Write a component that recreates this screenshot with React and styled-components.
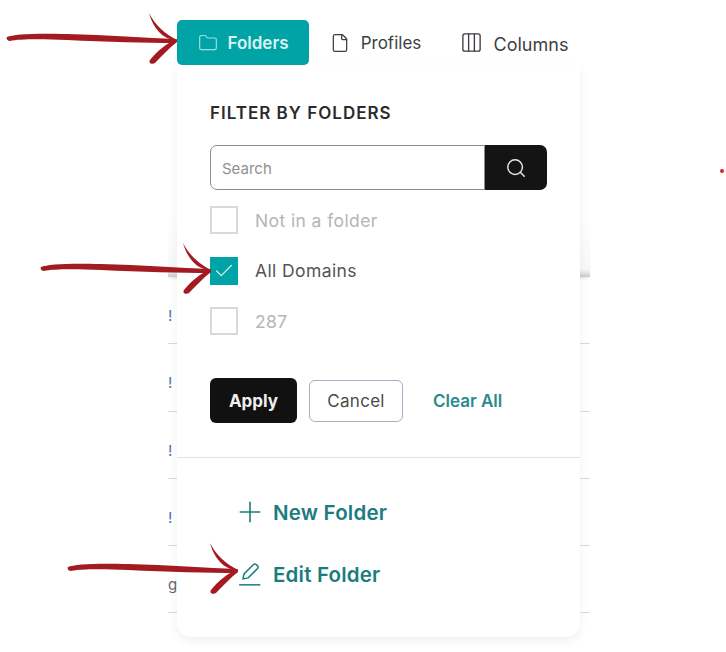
import React from "react";
import styled, { createGlobalStyle } from "styled-components";
import { Folder, File, Columns3, Search, Check } from "lucide-react";

const GlobalStyle = createGlobalStyle`
	body {
		margin: 0;
		background: #fff;
		font-family: "Inter", "Liberation Sans", sans-serif;
	}
`;

const rowStubs = ["!", "!", "!", "!", "g."];

const folders = [
	{ label: "Not in a folder", checked: false },
	{ label: "All Domains", checked: true },
	{ label: "287", checked: false },
];

const arrows = [
	{ left: 7, top: 13 },
	{ left: 41, top: 243 },
	{ left: 68, top: 543 },
];

const Arrow = ({ left, top }) => (
	<ArrowMark $left={left} $top={top} viewBox="0 0 170 52" width="170" height="52">
		<path d="M0 24 C6 21 30 20 60 21 C100 22 140 25 169 26 L169 30 C140 30 100 29 60 27 C34 26 12 26 3 28 C0 28 -1 25 0 24 Z" />
		<path d="M142 0 C148 12 158 21 170 27 C155 27 146 14 142 0 Z" />
		<path d="M143 47 C150 38 160 30 170 26 L170 29 C162 35 155 43 148 50 C145 52 141 50 143 47 Z" />
	</ArrowMark>
);

const App = () => {
	return (
		<>
			<GlobalStyle />
			<Page>
				<Toolbar>
					<ActiveTab>
						<Folder size={20} strokeWidth={1.4} color="#9fdedd" />
						Folders
					</ActiveTab>
					<Tab $width={133} $size={17}>
						<File size={20} strokeWidth={1.5} />
						Profiles
					</Tab>
					<Tab $width={144} $size={18}>
						<Columns3 size={23} strokeWidth={1.4} />
						<TabLabel>Columns</TabLabel>
					</Tab>
				</Toolbar>

				<Table>
					<TableHead />
					{rowStubs.map((stub, index) => (
						<TableRow key={index} $muted={stub !== "!"}>
							{stub}
						</TableRow>
					))}
				</Table>

				<Panel>
					<FilterSection>
						<PanelTitle>Filter by folders</PanelTitle>
						<SearchBar>
							<SearchInput placeholder="Search" readOnly />
							<SearchButton>
								<Search size={22} strokeWidth={1.6} />
							</SearchButton>
						</SearchBar>
						<CheckList>
							{folders.map((folder) => (
								<CheckRow key={folder.label} $checked={folder.checked}>
									<CheckBox $checked={folder.checked}>
										{folder.checked && <Check size={22} strokeWidth={1.3} />}
									</CheckBox>
									{folder.label}
								</CheckRow>
							))}
						</CheckList>
						<Actions>
							<ApplyButton>Apply</ApplyButton>
							<CancelButton>Cancel</CancelButton>
							<ClearLink>Clear All</ClearLink>
						</Actions>
					</FilterSection>
					<LinkSection>
						<FolderLink>
							<svg
								width="26"
								height="26"
								viewBox="0 0 24 24"
								fill="none"
								stroke="currentColor"
								strokeWidth="1.5"
							>
								<path d="M12 2.5 V21.5 M2.5 12 H21.5" />
							</svg>
							New Folder
						</FolderLink>
						<FolderLink>
							<svg
								width="26"
								height="26"
								viewBox="0 0 24 24"
								fill="none"
								stroke="currentColor"
								strokeWidth="1.4"
							>
								<path d="M5.5 16.5 L6.5 12 L15 3.5 C16 2.6 17 2.6 18 3.5 L18.8 4.3 C19.7 5.2 19.7 6.3 18.8 7.2 L10.3 15.6 Z" />
								<path d="M2 22 H21.5" />
							</svg>
							Edit Folder
						</FolderLink>
					</LinkSection>
				</Panel>

				{arrows.map((arrow) => (
					<Arrow key={arrow.top} left={arrow.left} top={arrow.top} />
				))}
				<RedDot />
			</Page>
		</>
	);
};

const Page = styled.div`
	position: relative;
	width: 726px;
	height: 652px;
	overflow: hidden;
	background: #fff;
`;

const Toolbar = styled.div`
	display: flex;
	align-items: center;
	height: 45px;
	padding: 20px 0 0 177px;
`;

const ActiveTab = styled.div`
	display: flex;
	align-items: center;
	justify-content: center;
	gap: 10px;
	width: 132px;
	height: 45px;
	border-radius: 5px;
	background: #00a4a6;
	color: #d8f2f1;
	font-size: 17px;
	font-weight: 600;
`;

const Tab = styled.div`
	display: flex;
	align-items: center;
	justify-content: center;
	gap: 11px;
	width: ${(props) => props.$width}px;
	color: #3b3f45;
	font-size: ${(props) => props.$size}px;
`;

const TabLabel = styled.span`
	padding-top: 3px;
`;

const Table = styled.div`
	margin: 145px 0 0 168px;
	width: 422px;
`;

const TableHead = styled.div`
	height: 67px;
	background: linear-gradient(#fff, #f8f8f8 88%, #ececec 92%, #c9c9c9 100%);
	box-shadow: 0 3px 3px -2px rgba(0, 0, 0, 0.14);
`;

const TableRow = styled.div`
	box-sizing: border-box;
	height: 67.3px;
	padding-top: 30px;
	border-bottom: 1px solid #d9d9d9;
	color: ${(props) => (props.$muted ? "#666" : "#4a6fb0")};
	font-size: 15px;
	line-height: 18px;
`;

const Panel = styled.div`
	position: absolute;
	top: 65px;
	left: 177px;
	width: 403px;
	height: 572px;
	border-radius: 0 0 14px 14px;
	background: #fff;
	box-shadow: 0 4px 10px rgba(0, 0, 0, 0.06);
`;

const FilterSection = styled.div`
	height: 393px;
	padding: 37px 33px 0;
	box-sizing: border-box;
	border-bottom: 1px solid #dfe3e6;
`;

const PanelTitle = styled.h3`
	margin: 0 0 21px;
	color: #2b2b2b;
	font-size: 17px;
	line-height: 22px;
	font-weight: 600;
	letter-spacing: 1px;
	text-transform: uppercase;
`;

const SearchBar = styled.div`
	display: flex;
	width: 337px;
	height: 45px;
`;

const SearchInput = styled.input`
	flex: 1;
	min-width: 0;
	box-sizing: border-box;
	padding: 2px 11px 0;
	border: 1.5px solid #8c8c8c;
	border-right-width: 1px;
	border-radius: 7px 0 0 7px;
	outline: none;
	font-family: inherit;
	font-size: 15px;

	&::placeholder {
		color: #8f8f8f;
	}
`;

const SearchButton = styled.div`
	display: flex;
	align-items: center;
	justify-content: center;
	width: 62px;
	border-radius: 0 7px 7px 0;
	background: #141414;
	color: #e6e6e6;
`;

const CheckList = styled.div`
	display: flex;
	flex-direction: column;
	gap: 22.5px;
	margin-top: 16px;
`;

const CheckRow = styled.div`
	display: flex;
	align-items: center;
	gap: 17px;
	color: ${(props) => (props.$checked ? "#555" : "#b5b5b5")};
	font-size: 17.5px;
	letter-spacing: 0.4px;
`;

const CheckBox = styled.span`
	display: flex;
	align-items: center;
	justify-content: center;
	box-sizing: border-box;
	width: 28px;
	height: 28px;
	border: 2px solid ${(props) => (props.$checked ? "#00a4a6" : "#d9d9d9")};
	background: ${(props) => (props.$checked ? "#00a4a6" : "#fff")};
	color: #d8f2f1;
`;

const Actions = styled.div`
	display: flex;
	align-items: center;
	margin-top: 43px;
`;

const ApplyButton = styled.div`
	display: flex;
	align-items: center;
	justify-content: center;
	width: 87px;
	height: 45px;
	border-radius: 6px;
	background: #111;
	color: #f0f0f0;
	font-size: 17px;
	font-weight: 700;
`;

const CancelButton = styled.div`
	display: flex;
	align-items: center;
	justify-content: center;
	box-sizing: border-box;
	width: 94px;
	height: 42px;
	margin-left: 12px;
	border: 1.5px solid #a5b0c4;
	border-radius: 6px;
	color: #4a4a4a;
	font-size: 17px;
	letter-spacing: 0.3px;
`;

const ClearLink = styled.div`
	margin-left: 30px;
	color: #2b8a8d;
	font-size: 17px;
	font-weight: 600;
`;

const LinkSection = styled.div`
	display: flex;
	flex-direction: column;
	gap: 32px;
	padding: 39px 0 0 60px;
`;

const FolderLink = styled.div`
	display: flex;
	align-items: center;
	gap: 10px;
	height: 30px;
	color: #1b7c80;
	font-size: 20.5px;
	font-weight: 600;
	letter-spacing: 0.2px;
`;

const ArrowMark = styled.svg`
	position: absolute;
	left: ${(props) => props.$left}px;
	top: ${(props) => props.$top}px;
	fill: #a31b21;
	overflow: visible;
`;

const RedDot = styled.span`
	position: absolute;
	left: 720px;
	top: 169px;
	width: 4px;
	height: 4px;
	border-radius: 50%;
	background: #e0202a;
`;

export default App;
